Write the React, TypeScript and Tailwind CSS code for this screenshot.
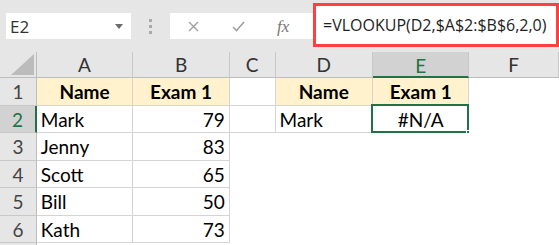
import React from "react";

const COLS = [
  { key: "A", w: 97 },
  { key: "B", w: 97 },
  { key: "C", w: 46 },
  { key: "D", w: 98 },
  { key: "E", w: 97 },
  { key: "F", w: 90 },
];
const ROW_H = [28, 27, 28, 27, 28, 27, 20];

type Cell = { text?: string; bold?: boolean; align?: "l" | "r" | "c"; fill?: boolean; grid?: boolean };

const data: Record<string, Cell> = {
  A1: { text: "Name", bold: true, align: "c", fill: true, grid: true },
  B1: { text: "Exam 1", bold: true, align: "c", fill: true, grid: true },
  A2: { text: "Mark", align: "l", grid: true },
  B2: { text: "79", align: "r", grid: true },
  A3: { text: "Jenny", align: "l", grid: true },
  B3: { text: "83", align: "r", grid: true },
  A4: { text: "Scott", align: "l", grid: true },
  B4: { text: "65", align: "r", grid: true },
  A5: { text: "Bill", align: "l", grid: true },
  B5: { text: "50", align: "r", grid: true },
  A6: { text: "Kath", align: "l", grid: true },
  B6: { text: "73", align: "r", grid: true },
  D1: { text: "Name", bold: true, align: "c", fill: true, grid: true },
  E1: { text: "Exam 1", bold: true, align: "c", fill: true, grid: true },
  D2: { text: "Mark", align: "l", grid: true },
  E2: { text: "#N/A", align: "c", grid: true },
  C1: { grid: true },
  C2: { grid: true },
};

export default function App() {
  return (
    <div className="relative w-[559px] h-[245px] overflow-hidden bg-white" style={{ fontFamily: "Lato, 'Open Sans', sans-serif" }}>
      {/* Toolbar */}
      <div className="h-[52px] bg-[#e6e6e6] pt-[13px] pl-[6px] flex items-start">
        <div className="w-[125px] h-[26px] bg-white flex items-center justify-between pl-[4px] pr-[8px]">
          <span className="text-[17px] text-[#333] leading-none" style={{ fontFamily: "'Open Sans', sans-serif" }}>E2</span>
          <svg width="8" height="5" viewBox="0 0 8 5"><path d="M0 0 L8 0 L4 5 Z" fill="#6b6b6b" /></svg>
        </div>
        <div className="w-[39px] h-[26px] flex flex-col items-center justify-center gap-[3px]">
          <div className="w-[3px] h-[3px] bg-[#a9a9a9]" />
          <div className="w-[3px] h-[3px] bg-[#a9a9a9]" />
          <div className="w-[3px] h-[3px] bg-[#a9a9a9]" />
        </div>
        <div className="flex-1 h-[26px] bg-white flex items-center">
          <svg className="ml-[18px]" width="11" height="11" viewBox="0 0 11 11">
            <path d="M1 1 L10 10 M10 1 L1 10" stroke="#a0a0a0" strokeWidth="1.4" />
          </svg>
          <svg className="ml-[33px]" width="13" height="11" viewBox="0 0 13 11">
            <path d="M1 6 L4.5 9.5 L12 1" stroke="#a0a0a0" strokeWidth="1.6" fill="none" />
          </svg>
          <span className="ml-[32px] text-[17px] italic text-[#777] leading-none" style={{ fontFamily: "'Liberation Serif', serif" }}>fx</span>
        </div>
      </div>

      {/* Red formula box overlay */}
      <div className="absolute left-[313px] top-[3px] w-[246px] h-[44px] border-[3px] border-[#ff4040] bg-white flex items-center pl-[7px]">
        <span className="text-[16px] text-[#222] whitespace-nowrap leading-none" style={{ fontFamily: "'Open Sans', sans-serif" }}>
          =VLOOKUP(D2,$A$2:$B$6,2,0)
        </span>
      </div>

      {/* Grid */}
      <div className="flex flex-col">
        {/* Column header row */}
        <div className="flex h-[26px]">
          <div className="w-[37px] h-full bg-[#e6e6e6] border-r border-b border-[#bdbdbd] flex items-end justify-end pr-[2px] pb-[2px]">
            <svg width="23" height="21" viewBox="0 0 23 21"><path d="M23 0 L23 21 L0 21 Z" fill="#bcbcbc" /></svg>
          </div>
          {COLS.map((c) => {
            const sel = c.key === "E";
            return (
              <div
                key={c.key}
                style={{ width: c.w }}
                className={
                  "h-full flex items-center justify-center text-[19px] leading-none border-r border-[#c8c8c8] " +
                  (sel ? "bg-[#d2d2d2] text-[#217346] border-b-2 border-b-[#217346]" : "bg-[#e6e6e6] text-[#333] border-b border-b-[#bdbdbd]")
                }
              >
                <span className={sel ? "mt-[2px]" : ""}>{c.key}</span>
              </div>
            );
          })}
        </div>
        {ROW_H.map((h, i) => {
          const r = i + 1;
          const selRow = r === 2;
          return (
            <div key={r} className="flex" style={{ height: h }}>
              <div
                className={
                  "w-[37px] h-full flex items-center justify-center text-[19px] leading-none border-b border-b-[#c8c8c8] " +
                  (selRow ? "bg-[#d2d2d2] text-[#217346] border-r-2 border-r-[#217346]" : "bg-[#e6e6e6] text-[#444] border-r border-r-[#bdbdbd]")
                }
              >
                {r <= 6 ? r : ""}
              </div>
              {COLS.map((c) => {
                const id = c.key + r;
                const cell = data[id];
                const isSel = id === "E2";
                return (
                  <div
                    key={id}
                    style={{ width: c.w }}
                    className={
                      "relative h-full flex items-center text-[19px] text-black leading-none " +
                      (cell?.grid ? "border-r border-b border-[#d4d4d4] " : "border-r border-b border-transparent ") +
                      (cell?.fill ? "bg-[#fff2cc] " : "bg-white ") +
                      (cell?.bold ? "font-bold " : "") +
                      (cell?.align === "r" ? "justify-end pr-[4px]" : cell?.align === "c" ? "justify-center" : "justify-start pl-[4px]")
                    }
                  >
                    {cell?.text}
                    {isSel && (
                      <>
                        <div className="absolute left-[-2px] top-[-2px] right-[-1px] bottom-[-1px] border-2 border-[#217346]" />
                        <div className="absolute right-[-4px] bottom-[-4px] w-[6px] h-[6px] bg-[#217346] border border-white" />
                      </>
                    )}
                  </div>
                );
              })}
            </div>
          );
        })}
      </div>
    </div>
  );
}
